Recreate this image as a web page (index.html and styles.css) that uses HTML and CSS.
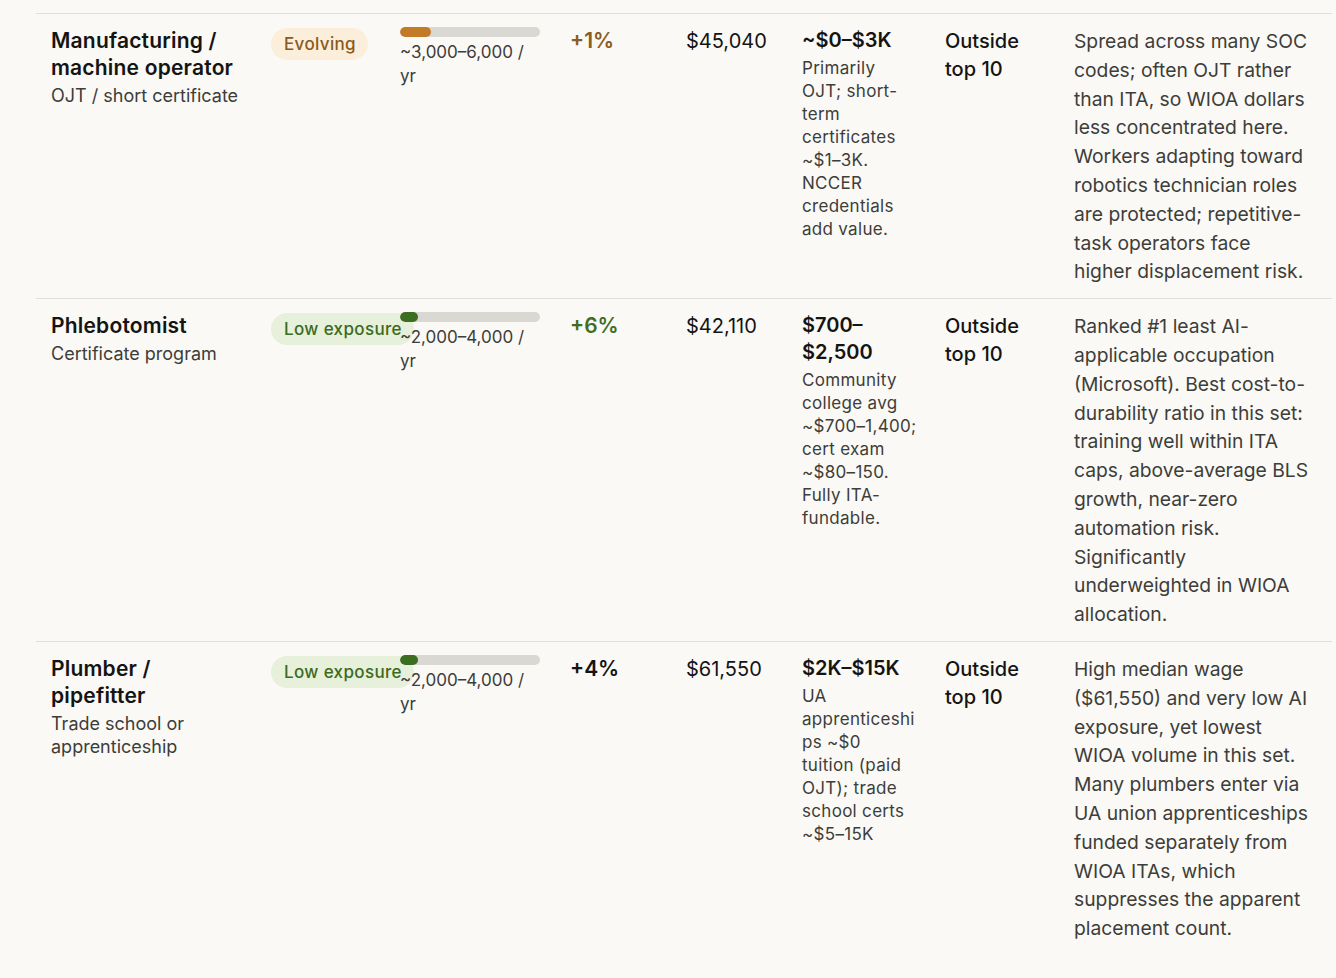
FILE: index.html
```html
<!DOCTYPE html>
<html lang="en">
<head>
<meta charset="utf-8">
<title>Occupations</title>
<link rel="stylesheet" href="styles.css">
</head>
<body>
<div class="wrap">
<table class="occ">
  <colgroup>
    <col class="c-occ"><col class="c-exp"><col class="c-vol"><col class="c-growth"><col class="c-wage"><col class="c-cost"><col class="c-rank"><col class="c-note">
  </colgroup>
  <tbody>
    <tr>
      <td><div class="title">Manufacturing / machine operator</div><div class="sub">OJT / short certificate</div></td>
      <td><span class="badge evolving">Evolving</span></td>
      <td><div class="bar"><div class="fill amber" style="width:22%"></div></div><div class="vol">~3,000–6,000 / yr</div></td>
      <td><span class="growth amber-t">+1%</span></td>
      <td><span class="wage">$45,040</span></td>
      <td class="cost-cell"><div class="cost">~$0–$3K</div><div class="desc">Primarily OJT; short-term certificates ~$1–3K. NCCER credentials add value.</div></td>
      <td><div class="rank">Outside top 10</div></td>
      <td class="note-cell"><div class="note">Spread across many SOC codes; often OJT rather than ITA, so WIOA dollars less concentrated here. Workers adapting toward robotics technician roles are protected; repetitive-task operators face higher displacement risk.</div></td>
    </tr>
    <tr>
      <td><div class="title">Phlebotomist</div><div class="sub">Certificate program</div></td>
      <td><span class="badge low">Low exposure</span></td>
      <td><div class="bar"><div class="fill green" style="width:13%"></div></div><div class="vol">~2,000–4,000 / yr</div></td>
      <td><span class="growth green-t">+6%</span></td>
      <td><span class="wage">$42,110</span></td>
      <td class="cost-cell"><div class="cost">$700–$2,500</div><div class="desc">Community college avg ~$700–1,400; cert exam ~$80–150. Fully ITA-fundable.</div></td>
      <td><div class="rank">Outside top 10</div></td>
      <td class="note-cell"><div class="note">Ranked #1 least AI-applicable occupation (Microsoft). Best cost-to-durability ratio in this set: training well within ITA caps, above-average BLS growth, near-zero automation risk. Significantly underweighted in WIOA allocation.</div></td>
    </tr>
    <tr class="last">
      <td><div class="title">Plumber / pipefitter</div><div class="sub">Trade school or apprenticeship</div></td>
      <td><span class="badge low">Low exposure</span></td>
      <td><div class="bar"><div class="fill green" style="width:13%"></div></div><div class="vol">~2,000–4,000 / yr</div></td>
      <td><span class="growth">+4%</span></td>
      <td><span class="wage">$61,550</span></td>
      <td class="cost-cell"><div class="cost">$2K–$15K</div><div class="desc">UA apprenticeships ~$0 tuition (paid OJT); trade school certs ~$5–15K</div></td>
      <td><div class="rank">Outside top 10</div></td>
      <td class="note-cell"><div class="note">High median wage ($61,550) and very low AI exposure, yet lowest WIOA volume in this set. Many plumbers enter via UA union apprenticeships funded separately from WIOA ITAs, which suppresses the apparent placement count.</div></td>
    </tr>
  </tbody>
</table>
</div>
</body>
</html>
```

FILE: styles.css
```css
html, body {
  margin: 0;
  padding: 0;
  background: #faf9f5;
}
body {
  font-family: Inter, "Noto Sans", sans-serif;
  color: #141413;
  overflow: hidden;
}
.wrap {
  padding: 13px 0 0 36px;
}
.occ {
  table-layout: fixed;
  width: 1296px;
  border-collapse: collapse;
}
.c-occ { width: 220px; }
.c-exp { width: 129px; }
.c-vol { width: 170px; }
.c-growth { width: 116px; }
.c-wage { width: 116px; }
.c-cost { width: 143px; }
.c-rank { width: 129px; }
.c-note { width: 273px; }

.occ td {
  vertical-align: top;
  padding: 13px 15px 12px 15px;
  border-top: 1px solid #e2e0da;
}
.occ td.cost-cell {
  padding-right: 13px;
}
.occ td.note-cell {
  padding-right: 21px;
}
.occ tr.last td {
  border-bottom: 1px solid #e2e0da;
  padding-bottom: 35px;
}
.title {
  font-size: 21px;
  font-weight: 600;
  line-height: 27px;
  letter-spacing: 0.2px;
}
.sub {
  font-size: 18px;
  line-height: 23px;
  color: #3d3d3a;
  margin-top: 3px;
}
.badge {
  display: inline-block;
  white-space: nowrap;
  font-size: 17px;
  font-weight: 500;
  line-height: 20px;
  letter-spacing: 0.35px;
  padding: 6px 12px 6px 13px;
  border-radius: 16px;
  margin-top: 1px;
}
.badge.evolving {
  background: #fbeedb;
  color: #8a5a1c;
}
.badge.low {
  background: #e6f0db;
  color: #3c6b1e;
}
.bar {
  position: relative;
  height: 10px;
  border-radius: 5px;
  background: #dad8d2;
  overflow: hidden;
}
.fill {
  height: 100%;
  border-radius: 5px;
}
.fill.amber { background: #c27a26; }
.fill.green { background: #3c6e1f; }
.vol {
  position: relative;
  font-size: 17px;
  line-height: 24px;
  color: #3d3d3a;
  margin-top: 3px;
}
.growth {
  font-size: 21px;
  font-weight: 600;
  line-height: 28px;
}
.amber-t { color: #8d5c22; }
.green-t { color: #3f6e22; }
.wage {
  font-size: 20px;
  line-height: 28px;
}
.cost {
  font-size: 20px;
  font-weight: 600;
  line-height: 27px;
}
.desc {
  font-size: 17px;
  line-height: 23px;
  letter-spacing: 0.3px;
  color: #3d3d3a;
  margin-top: 3px;
  overflow-wrap: break-word;
}
.rank {
  font-size: 20px;
  font-weight: 500;
  line-height: 28px;
}
.note {
  font-size: 19.3px;
  line-height: 28.8px;
  color: #3d3d3a;
}
```
